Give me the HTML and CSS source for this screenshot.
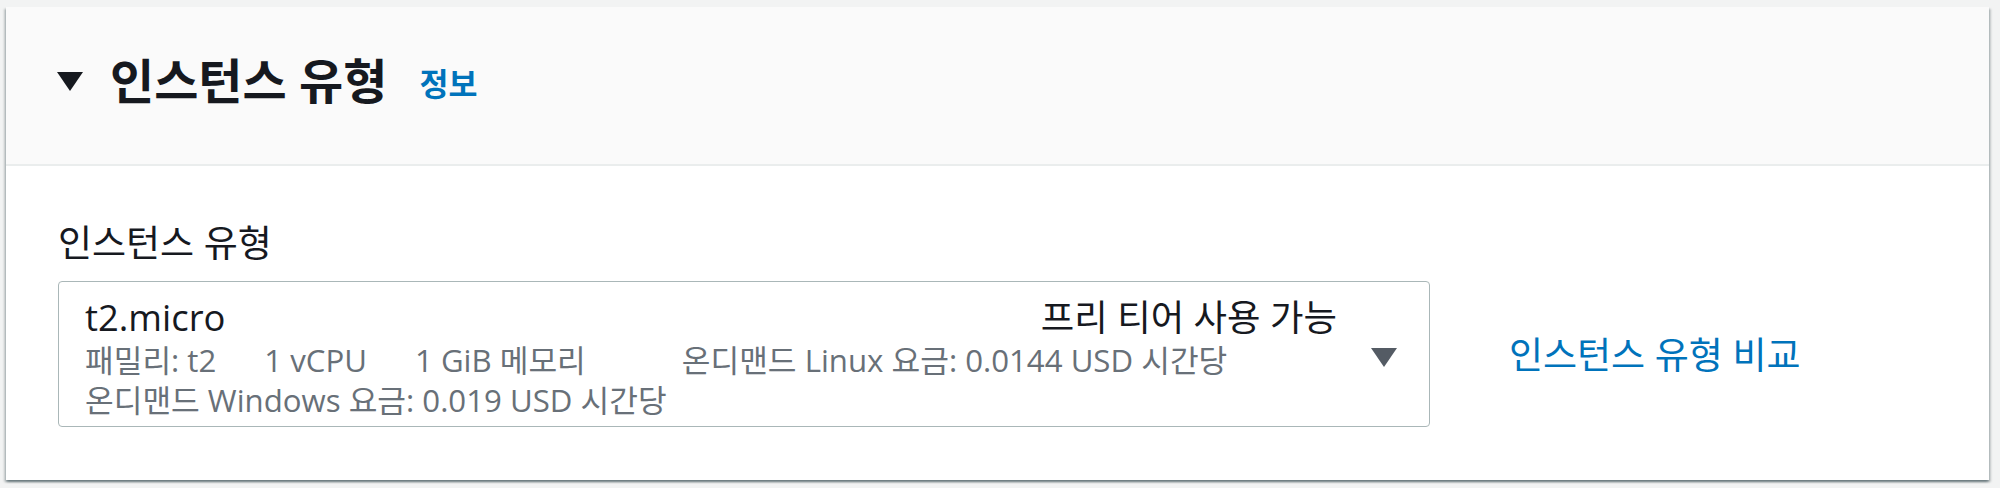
FILE: index.html
```html
<!doctype html>
<html>
    <head>
        <title>인스턴스 유형</title>
        <meta charset="UTF-8">
        <link rel="stylesheet" href="styles.css">
    </head>

    <body>
        <!--Panel Start-->
        <section class="panel">
            <div class="panel-header">
                <svg class="caret" width="26" height="19" viewBox="0 0 26 19">
                    <polygon points="0,0 26,0 13,19" fill="#16191f"/>
                </svg>
                <h2 class="panel-title">인스턴스 유형</h2>
                <a class="info-link" href="#">정보</a>
            </div>

            <div class="panel-body">
                <div class="field-label">인스턴스 유형</div>
                <div class="field-row">
                    <div class="select">
                        <div class="select-main">
                            <div class="select-top">
                                <span class="type-name">t2.micro</span>
                                <span class="tier">프리 티어 사용 가능</span>
                            </div>
                            <div class="meta">
                                <span class="tag">패밀리: t2</span>
                                <span class="tag">1 vCPU</span>
                                <span class="tag wide">1 GiB 메모리</span>
                                <span class="tag">온디맨드 Linux 요금: 0.0144 USD 시간당</span>
                            </div>
                            <div class="meta">
                                <span class="tag">온디맨드 Windows 요금: 0.019 USD 시간당</span>
                            </div>
                        </div>
                        <svg class="arrow" width="26" height="19" viewBox="0 0 26 19">
                            <polygon points="0,0 26,0 13,19" fill="#545b64"/>
                        </svg>
                    </div>
                    <a class="compare-link" href="#">인스턴스 유형 비교</a>
                </div>
            </div>
        </section>
        <!--Panel End-->
    </body>
</html>
```

FILE: styles.css
```css
body{
    box-sizing: border-box;
    margin: 0;
    padding: 7px 11px 6px 6px;
    font-family: "Open Sans", "Noto Sans CJK KR", sans-serif;
    background: #F2F3F3;
    color: #16191F;
}

/* Panel */
.panel{
    background: white;
    box-shadow: 0 2px 2px rgba(0, 28, 36, 0.35), 2px 2px 2px rgba(0, 28, 36, 0.18), -2px 2px 2px rgba(0, 28, 36, 0.18);
}

.panel-header{
    display: flex;
    align-items: center;
    height: 159px;
    padding: 0 0 9px 51px;
    box-sizing: border-box;
    background: #FAFAFA;
    border-bottom: 2px solid #EAEDED;
}

.panel-header .caret{
    display: block;
    margin-right: 27px;
}

.panel-title{
    margin: 0;
    font-size: 48px;
    font-weight: bold;
    line-height: 60px;
}

.info-link{
    margin-left: 32px;
    font-size: 31.5px;
    font-weight: bold;
    color: #0073BB;
    text-decoration: none;
    line-height: 42px;
    padding-top: 6px;
}
/* Panel */

/* Body */
.panel-body{
    padding: 52px 0 53px 52px;
}

.field-label{
    font-size: 37px;
    line-height: 50px;
    margin-bottom: 13px;
}

.field-row{
    display: flex;
    align-items: center;
}

.select{
    display: flex;
    align-items: center;
    width: 1372px;
    box-sizing: border-box;
    border: 1px solid #AAB7B8;
    border-radius: 4px;
    padding: 12px 32px 6px 26px;
}

.select-main{
    flex: 1;
}

.select-top{
    display: flex;
    justify-content: space-between;
    font-size: 36.4px;
    line-height: 46px;
    padding-right: 34px;
}

.meta{
    display: flex;
    font-size: 31.2px;
    line-height: 40px;
    color: #687078;
}

.meta .tag{
    margin-right: 48px;
}

.meta .tag.wide{
    margin-right: 96px;
}

.select .arrow{
    display: block;
}

.compare-link{
    margin-left: 79px;
    font-size: 37px;
    color: #0073BB;
    text-decoration: none;
    padding-bottom: 2px;
}
/* Body */
```
